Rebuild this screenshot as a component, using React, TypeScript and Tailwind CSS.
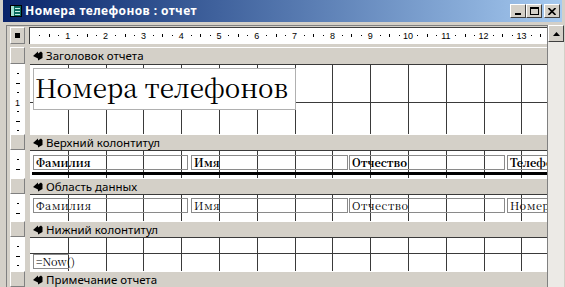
import React from "react";

const CM = 37.8;
const GRID_X = Array.from({ length: 13 }, (_, i) => Math.round(CM * (i + 1)));

function Grid({ h, lines }: { h: number; lines: number[] }) {
  return (
    <svg className="absolute left-0 top-0 pointer-events-none" width={517} height={h}>
      {GRID_X.map((x) => (
        <line key={"v" + x} x1={x + 0.5} y1={0} x2={x + 0.5} y2={h} stroke="#3a3a3a" strokeWidth={1} />
      ))}
      {lines.map((y) => (
        <line key={"h" + y} x1={0} y1={y + 0.5} x2={517} y2={y + 0.5} stroke="#3a3a3a" strokeWidth={1} />
      ))}
    </svg>
  );
}

function VRuler({ h }: { h: number }) {
  const marks: React.ReactNode[] = [];
  for (let i = 1; i * 9.45 < h - 1; i++) {
    const y = Math.round(i * 9.45);
    if (i % 4 === 0) {
      marks.push(
        <text key={i} x={7.5} y={y + 3.5} fontSize={9} textAnchor="middle" fontFamily="Liberation Sans, sans-serif" fill="#000">
          {i / 4}
        </text>
      );
    } else {
      const w = i % 2 === 0 ? 4 : 2;
      marks.push(<rect key={i} x={Math.round(8 - w / 2)} y={y} width={w} height={1} fill="#000" />);
    }
  }
  return (
    <svg width={15} height={h} className="block">
      <rect x={0} y={0} width={15} height={h} fill="#fff" />
      {marks}
    </svg>
  );
}

function HRuler() {
  const items: React.ReactNode[] = [];
  for (let k = 0; k < 14; k++) {
    const base = 1 + CM * k;
    if (k > 0) {
      items.push(
        <text key={"n" + k} x={base} y={11.5} fontSize={9} textAnchor="middle" fontFamily="Liberation Sans, sans-serif" fill="#000">
          {k}
        </text>
      );
    }
    items.push(<rect key={"a" + k} x={Math.round(base + 9.45)} y={8} width={1} height={1} fill="#000" />);
    items.push(<rect key={"b" + k} x={Math.round(base + 18.9)} y={7} width={1} height={3} fill="#000" />);
    items.push(<rect key={"c" + k} x={Math.round(base + 28.35)} y={8} width={1} height={1} fill="#000" />);
  }
  return (
    <svg width={518} height={17} className="block">
      <rect x={0} y={0} width={518} height={17} fill="#fff" />
      <line x1={0} y1={0.5} x2={518} y2={0.5} stroke="#404040" />
      <line x1={0.5} y1={0} x2={0.5} y2={17} stroke="#404040" />
      {items}
    </svg>
  );
}

function SectionIcon() {
  return (
    <svg width={10} height={10} viewBox="0 0 10 10" className="block">
      <path d="M0 5 L5 0.5 L5 2.5 L8 0.5 L9.5 2 L9.5 7 L5 9.5 L5 7.5 Z" fill="#000" />
    </svg>
  );
}

function RaisedBox({ children }: { children?: React.ReactNode }) {
  return (
    <div className="w-[15px] h-full bg-[#d4d0c8] border-t border-l border-white border-r border-b border-r-[#808080] border-b-[#808080] flex items-center justify-center">
      {children}
    </div>
  );
}

function HeaderRow({ title, h }: { title: string; h: number }) {
  return (
    <div className="flex shrink-0" style={{ height: h }}>
      <RaisedBox />
      <div className="w-[5px]" />
      <div className="flex-1 flex items-center bg-[#d4d0c8] border-t border-white pl-[3px]">
        <SectionIcon />
        <span className="ml-[3px] text-[11.5px] leading-none text-black">{title}</span>
      </div>
    </div>
  );
}

function ContentRow({ h, lines, children }: { h: number; lines: number[]; children?: React.ReactNode }) {
  return (
    <div className="flex shrink-0" style={{ height: h }}>
      <VRuler h={h} />
      <div className="w-[5px]" />
      <div className="flex-1 relative bg-white overflow-hidden">
        <Grid h={h} lines={lines} />
        {children}
      </div>
    </div>
  );
}

const COLS = [
  { ml: "ml-[3px]", w: "w-[155px]" },
  { ml: "ml-[3px]", w: "w-[157px]" },
  { ml: "ml-[1px]", w: "w-[156px]" },
  { ml: "ml-[2px]", w: "w-[60px]" },
];

function FieldRow({ labels, bold, top }: { labels: string[]; bold: boolean; top: string }) {
  return (
    <div className={`relative flex ${top}`}>
      {labels.map((l, i) => (
        <div
          key={i}
          className={`${COLS[i].ml} ${COLS[i].w} shrink-0 h-[15px] border border-[#8a8a8a] flex items-center pl-[2px] overflow-hidden whitespace-nowrap leading-none [font-family:Noto_Serif_CJK_SC,serif] text-black ${
            bold ? "font-bold text-[11px]" : "text-[11px] tracking-[0.5px]"
          }`}
        >
          {l}
        </div>
      ))}
    </div>
  );
}

export default function App() {
  return (
    <div className="w-[565px] h-[287px] overflow-hidden bg-[#d4d0c8] flex flex-col">
      {/* Title bar */}
      <div className="h-[22px] shrink-0 mx-[3px] flex items-center bg-linear-to-r from-[#0a246a] to-[#a6caf0] pl-[7px] pr-[2px]">
        <svg width={12} height={12} viewBox="0 0 12 12" className="block">
          <rect x={0.5} y={0.5} width={11} height={11} fill="#0b6b5e" stroke="#000" />
          <rect x={1} y={1} width={3} height={10} fill="#9fe0d0" />
          <rect x={5} y={3} width={5} height={1} fill="#c8f0e6" />
          <rect x={5} y={6} width={5} height={1} fill="#c8f0e6" />
          <rect x={5} y={9} width={5} height={1} fill="#c8f0e6" />
        </svg>
        <span className="ml-[3px] text-white font-bold text-[12px] tracking-[0.4px] leading-none">Номера телефонов : отчет</span>
        <div className="ml-auto flex items-center">
          <div className="w-[16px] h-[14px] bg-[#d4d0c8] border-t border-l border-white border-r border-b border-r-[#404040] border-b-[#404040] flex items-end justify-center pb-[2px]">
            <div className="w-[6px] h-[2px] bg-black" />
          </div>
          <div className="w-[16px] h-[14px] bg-[#d4d0c8] border-t border-l border-white border-r border-b border-r-[#404040] border-b-[#404040] flex items-center justify-center">
            <div className="w-[9px] h-[8px] border border-black border-t-2" />
          </div>
          <div className="ml-[2px] w-[16px] h-[14px] bg-[#d4d0c8] border-t border-l border-white border-r border-b border-r-[#404040] border-b-[#404040] flex items-center justify-center">
            <svg width={8} height={7} viewBox="0 0 8 7" className="block">
              <path d="M0.5 0 L7.5 7 M7.5 0 L0.5 7" stroke="#000" strokeWidth={1.6} />
            </svg>
          </div>
        </div>
      </div>

      {/* Client */}
      <div className="flex-1 min-h-0 flex pt-[3px] pl-[6px] pr-[1px]">
        <div className="flex-1 min-w-0 flex flex-col border-l border-t border-[#808080] pl-[3px] pt-[1px]">
          {/* ruler row */}
          <div className="flex h-[17px] shrink-0">
            <RaisedBox>
              <div className="w-[5px] h-[5px] bg-black" />
            </RaisedBox>
            <div className="w-[4px]" />
            <div className="flex-1 overflow-hidden">
              <HRuler />
            </div>
          </div>
          <div className="h-[3px] shrink-0" />

          <HeaderRow title="Заголовок отчета" h={17} />
          <ContentRow h={70} lines={[0, 38]}>
            <div className="relative ml-[3px] mt-[4px] w-[263px] h-[42px] bg-white border border-[#b0b0b0] pl-[1px] pb-[4px] flex items-center [font-family:Noto_Serif_CJK_SC,serif] text-[26px] leading-none text-black whitespace-nowrap overflow-hidden">
              Номера телефонов
            </div>
          </ContentRow>

          <HeaderRow title="Верхний колонтитул" h={16} />
          <ContentRow h={28} lines={[0]}>
            <FieldRow labels={["Фамилия", "Имя", "Отчество", "Телефон"]} bold top="mt-[5px]" />
            <div className="relative ml-[2px] mt-[2px] h-[3px] bg-black" />
          </ContentRow>

          <HeaderRow title="Область данных" h={16} />
          <ContentRow h={27} lines={[0]}>
            <FieldRow labels={["Фамилия", "Имя", "Отчество", "НомерТелефона"]} bold={false} top="mt-[4px]" />
          </ContentRow>

          <HeaderRow title="Нижний колонтитул" h={16} />
          <ContentRow h={34} lines={[0, 16]}>
            <div className="relative ml-[3px] mt-[17px] w-[36px] h-[15px] border border-[#8a8a8a] border-r-0 pl-[2px] flex items-center [font-family:Noto_Serif_CJK_SC,serif] text-[11px] leading-none text-black whitespace-nowrap">
              =Now()
            </div>
          </ContentRow>

          <HeaderRow title="Примечание отчета" h={16} />
        </div>

        {/* Scrollbar */}
        <div className="w-[17px] shrink-0 flex flex-col border-l border-[#808080]">
          <div className="h-[17px] shrink-0 bg-[#d4d0c8] border-t border-l border-white border-r border-b border-r-[#404040] border-b-[#404040] flex items-center justify-center">
            <svg width={7} height={4} viewBox="0 0 7 4" className="block">
              <path d="M3.5 0 L7 4 L0 4 Z" fill="#000" />
            </svg>
          </div>
          <div className="flex-1 bg-[#eceae6]" />
        </div>
      </div>
    </div>
  );
}
